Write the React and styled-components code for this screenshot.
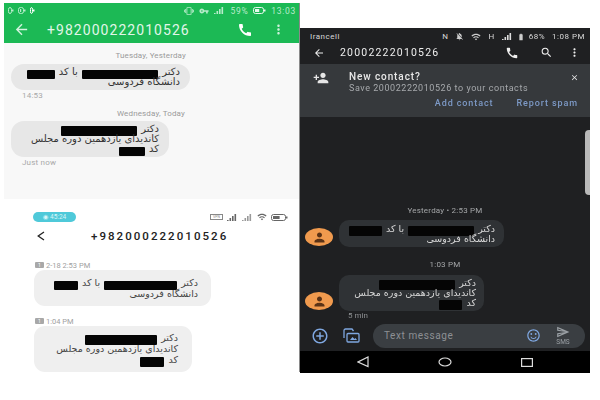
import styled, { createGlobalStyle } from 'styled-components';
import {
  MdArrowBack,
  MdCall,
  MdMoreVert,
  MdSearch,
  MdPersonAdd,
  MdClose,
  MdAddCircleOutline,
  MdPerson,
  MdOutlineSentimentSatisfied,
  MdOutlineSend,
  MdWifi,
  MdVibration,
  MdVpnKey,
  MdNotificationsOff,
  MdBatteryFull,
} from 'react-icons/md';

const GlobalStyle = createGlobalStyle`
  html, body {
    margin: 0;
    padding: 0;
    background: #fff;
    overflow: hidden;
  }
  * { box-sizing: border-box; }
`;

const Page = styled.div`
  width: 600px;
  height: 400px;
  display: flex;
  padding: 3px 0 0 4px;
  font-family: Roboto, "DejaVu Sans", sans-serif;
  filter: blur(0.35px);
`;
const LeftColumn = styled.div`
  width: 296px;
  height: 369px;
  display: flex;
  flex-direction: column;
  border-right: 1px solid #8a8a8a;
`;
const GreenPanel = styled.section`
  height: 197px;
  background: #f8f8f8;
`;
const GreenBar = styled.header`
  height: 40px;
  background: #1cb955;
  color: #fff;
`;
const GreenStatus = styled.div`
  height: 13px;
  padding: 2px 3px 0 4px;
  display: flex;
  align-items: center;
  justify-content: space-between;
  font-size: 8.5px;
  letter-spacing: 0.7px;
  color: #b8eccb;
`;
const StatusGroup = styled.div`
  display: flex;
  align-items: center;
  gap: ${(p) => p.$gap || 4}px;
`;
const GreenToolbar = styled.div`
  height: 27px;
  display: flex;
  align-items: center;
  padding: 0 0 0 9px;
  svg { flex: none; }
`;
const GreenTitle = styled.div`
  width: 190px;
  margin-left: 17px;
  font-size: 14px;
  letter-spacing: 1.05px;
  color: #e2f6e9;
  white-space: nowrap;
`;
const Thread = styled.div`
  padding: ${(p) => p.$pad || '0'};
`;
const DateLabel = styled.div`
  width: ${(p) => p.$width}px;
  height: 12px;
  line-height: 12px;
  font-size: 8px;
  letter-spacing: 0.15px;
  color: #9a9a9a;
  text-align: right;
  margin-top: ${(p) => p.$top || 0}px;
`;
const Bubble = styled.div`
  width: ${(p) => p.$width}px;
  height: ${(p) => p.$height}px;
  margin: ${(p) => p.$margin || '0'};
  padding: ${(p) => p.$pad || '5px 11px'};
  background: ${(p) => p.$bg || '#e7e7e7'};
  color: ${(p) => p.$color || '#333'};
  border-radius: ${(p) => p.$radius || 13}px;
  direction: rtl;
  font-family: "DejaVu Sans", sans-serif;
  font-size: ${(p) => p.$size || 10}px;
  white-space: nowrap;
`;
const Line = styled.div`
  height: ${(p) => p.$line || 10}px;
  line-height: ${(p) => p.$line || 10}px;
`;
const Redact = styled.span`
  display: inline-block;
  width: ${(p) => p.$w}px;
  height: ${(p) => p.$h || 9}px;
  margin: -3px 1px;
  vertical-align: -1px;
  background: #050505;
  border-radius: 1px;
`;
const TimeLabel = styled.div`
  padding-left: 11px;
  height: 12px;
  line-height: 12px;
  font-size: 8px;
  letter-spacing: 0.2px;
  color: #a8a8a8;
`;
const WhitePanel = styled.section`
  flex: 1;
  padding: 13px 0 0 29px;
  background: #fff;
`;
const WhiteStatus = styled.div`
  height: 10px;
  width: 255px;
  display: flex;
  align-items: center;
  justify-content: space-between;
`;
const TimerChip = styled.div`
  width: 43px;
  height: 10px;
  border-radius: 5px;
  background: #4fc9d9;
  color: #d9f5f8;
  font-size: 6.5px;
  line-height: 10px;
  text-align: center;
`;
const VpnBox = styled.span`
  width: 13px;
  height: 6px;
  border: 1px solid #888;
  color: #888;
  font-size: 3.5px;
  line-height: 4px;
  text-align: center;
`;
const WhiteHeader = styled.div`
  height: 27px;
  display: flex;
  align-items: center;
  margin-left: 1px;
  color: #222;
  svg { margin-left: 3px; }
`;
const WhiteTitle = styled.div`
  margin-left: 46px;
  font-size: 11.5px;
  font-weight: 500;
  letter-spacing: 2.05px;
  white-space: nowrap;
`;
const SimRow = styled.div`
  display: flex;
  align-items: center;
  gap: 2px;
  height: 12px;
  margin: ${(p) => p.$top || 0}px 0 0 2px;
  font-size: 7.5px;
  color: #a0a0a0;
`;
const SimBadge = styled.span`
  width: 9px;
  height: 6px;
  background: #a8a8a8;
  color: #fff;
  font-size: 5px;
  line-height: 6px;
  text-align: center;
  border-radius: 1px;
`;
const DarkColumn = styled.section`
  position: relative;
  width: 290px;
  height: 345px;
  margin-top: 25px;
  display: flex;
  flex-direction: column;
  background: #1f2022;
  color: #e6e6e6;
`;
const DarkStatus = styled.div`
  height: 14px;
  padding: 3px 5px 0 10px;
  display: flex;
  align-items: center;
  justify-content: space-between;
  font-size: 8px;
  letter-spacing: 0.5px;
  color: #d8d8d8;
`;
const DarkToolbar = styled.div`
  height: 23px;
  margin-top: -1px;
  display: flex;
  align-items: center;
  padding: 0 0 0 13px;
  color: #eee;
`;
const DarkTitle = styled.div`
  width: 165px;
  margin-left: 15px;
  font-size: 10.5px;
  letter-spacing: 1.2px;
`;
const ToolIcons = styled.div`
  display: flex;
  align-items: center;
  gap: 21px;
  svg:last-child { margin-left: -6px; }
`;
const Banner = styled.div`
  height: 53px;
  display: flex;
  background: #36393c;
  padding: 4px 11px 0 13px;
`;
const BannerBody = styled.div`
  margin-left: 20px;
  flex: 1;
`;
const BannerTitle = styled.div`
  font-size: 10px;
  font-weight: 500;
  letter-spacing: 0.9px;
  line-height: 13px;
  margin-top: 2px;
  color: #e8e8e8;
`;
const BannerText = styled.div`
  font-size: 9px;
  letter-spacing: 0.55px;
  line-height: 10px;
  white-space: nowrap;
  color: #a6a9ac;
`;
const BannerActions = styled.div`
  display: flex;
  justify-content: flex-end;
  gap: 23px;
  margin: 5px -8px 0 0;
  font-size: 9px;
  font-weight: 500;
  letter-spacing: 0.9px;
  color: #7d9ac7;
`;
const DarkThread = styled.div`
  flex: 1;
  display: flex;
  flex-direction: column;
  justify-content: flex-end;
  padding: 0 0 3px 5px;
`;
const Centered = styled.div`
  width: 280px;
  height: 10px;
  line-height: 10px;
  margin-bottom: ${(p) => p.$bottom}px;
  text-align: center;
  font-size: 8px;
  letter-spacing: 0.2px;
  color: #a4a6a8;
`;
const MessageRow = styled.div`
  display: flex;
  align-items: flex-end;
  gap: 6px;
  margin-bottom: ${(p) => p.$bottom || 0}px;
`;
const Avatar = styled.div`
  width: 28px;
  height: 18px;
  border-radius: 50%;
  background: #f09a4e;
  color: #5a3216;
  display: flex;
  align-items: center;
  justify-content: center;
  margin-bottom: 1px;
`;
const Ago = styled.div`
  height: 9px;
  line-height: 9px;
  margin-left: 43px;
  font-size: 8px;
  color: #8e9093;
`;
const Composer = styled.div`
  height: 28px;
  display: flex;
  align-items: center;
  padding: 0 5px 3px 11px;
  color: #7fa7e0;
`;
const ComposerIcons = styled.div`
  display: flex;
  align-items: center;
  gap: 13px;
`;
const Field = styled.div`
  flex: 1;
  height: 24px;
  margin-left: 13px;
  padding: 0 10px 0 11px;
  border-radius: 12px;
  background: #3a3e42;
  display: flex;
  align-items: center;
  font-size: 10px;
  letter-spacing: 0.6px;
  color: #8d9094;
`;
const FieldText = styled.span`
  flex: 1;
`;
const EmojiIcon = styled(MdOutlineSentimentSatisfied)`
  color: #7fa7e0;
`;
const SendGroup = styled.div`
  width: 24px;
  margin-left: 10px;
  display: flex;
  flex-direction: column;
  align-items: center;
  font-size: 6.5px;
  letter-spacing: 0;
  line-height: 7px;
  color: #9ba0a5;
`;
const NavBar = styled.nav`
  height: 22px;
  background: #000;
  display: flex;
  align-items: center;
  justify-content: space-between;
  padding: 0 57px 0 57px;
`;
const ScrollHandle = styled.div`
  position: absolute;
  top: 102px;
  right: 0;
  width: 5px;
  height: 65px;
  background: #b9b9b9;
  border-radius: 4px 0 0 4px;
`;

const Bars = ({ color, count = 4 }) => (
  <svg width="11" height="7" viewBox="0 0 11 7" fill={color}>
    {Array.from({ length: count }).map((_, i) => (
      <rect key={i} x={i * 2.5} y={6 - i * 2} width="1.6" height={1 + i * 2} />
    ))}
  </svg>
);

const Battery = ({ color, width = 14 }) => (
  <svg width={width} height="7" viewBox={`0 0 ${width} 7`} fill="none" stroke={color}>
    <rect x="0.5" y="0.5" width={width - 3} height="6" rx="2" />
    <rect x="2" y="2" width={(width - 6) * 0.6} height="3" fill={color} stroke="none" />
    <rect x={width - 2} y="2.5" width="1.5" height="2" fill={color} stroke="none" />
  </svg>
);

const BackChevron = () => (
  <svg width="8" height="10" viewBox="0 0 8 10" fill="none" stroke="currentColor" strokeWidth="1.3">
    <path d="M7 1L1.2 5L7 9" />
  </svg>
);

const GalleryIcon = () => (
  <svg width="18" height="15" viewBox="0 0 18 15" fill="none" stroke="currentColor" strokeWidth="1.3">
    <path d="M2 10V2.5A1.5 1.5 0 0 1 3.5 1H10l1.5 2" />
    <rect x="5" y="5.5" width="12" height="8.5" rx="1" />
    <path d="M8 12l2.5-3 2 2 1-1 1.5 2z" fill="currentColor" stroke="none" />
  </svg>
);

const BackTriangle = () => (
  <svg width="12" height="12" viewBox="0 0 12 12" fill="none" stroke="#ddd" strokeWidth="1.2">
    <path d="M11 1v9.5L1 6z" />
  </svg>
);
const HomeCircle = () => (
  <svg width="14" height="10" viewBox="0 0 14 10" fill="none" stroke="#ddd" strokeWidth="1.2">
    <ellipse cx="7" cy="5" rx="6" ry="4" />
  </svg>
);
const RecentSquare = () => (
  <svg width="12" height="9" viewBox="0 0 12 9" fill="none" stroke="#ddd" strokeWidth="1.2">
    <rect x="0.6" y="0.6" width="10.8" height="7.8" />
  </svg>
);

const App = () => {
  return (
    <>
      <GlobalStyle />
      <Page>
        <LeftColumn>
          <GreenPanel>
            <GreenBar>
              <GreenStatus>
                <StatusGroup $gap={4}>
                  <Battery color="#b8eccb" width={6} />
                  <Battery color="#b8eccb" width={8} />
                  <Battery color="#fff" width={5} />
                </StatusGroup>
                <StatusGroup $gap={5}>
                  <MdVibration size={10} />
                  <MdVpnKey size={10} />
                  <Bars color="#b8eccb" />
                  <span>59%</span>
                  <Battery color="#e8f8ee" width={13} />
                  <span>13:03</span>
                </StatusGroup>
              </GreenStatus>
              <GreenToolbar>
                <MdArrowBack size={17} color="#d4f3df" />
                <GreenTitle>+982000222010526</GreenTitle>
                <MdCall size={16} />
                <MdMoreVert size={15} style={{ marginLeft: 18 }} color="#cdf1da" />
              </GreenToolbar>
            </GreenBar>
            <Thread $pad="7px 0 0 7px">
              <DateLabel $width={175}>Tuesday, Yesterday</DateLabel>
              <Bubble $width={179} $height={26} $margin="2px 0 0" $pad="3px 10px">
                <Line>
                  دکتر <Redact $w={76} /> با کد <Redact $w={28} />
                </Line>
                <Line>دانشگاه فردوسی</Line>
              </Bubble>
              <TimeLabel>14:53</TimeLabel>
              <DateLabel $width={174} $top={6}>Wednesday, Today</DateLabel>
              <Bubble $width={158} $height={36} $margin="1px 0 0" $pad="3px 10px">
                <Line>
                  دکتر <Redact $w={76} $h={10} />
                </Line>
                <Line>کاندیدای یازدهمین دوره مجلس</Line>
                <Line>
                  کد <Redact $w={26} />
                </Line>
              </Bubble>
              <TimeLabel>Just now</TimeLabel>
            </Thread>
          </GreenPanel>
          <WhitePanel>
            <WhiteStatus>
              <TimerChip>◉ 45:24</TimerChip>
              <StatusGroup $gap={4}>
                <VpnBox>VPN</VpnBox>
                <Bars color="#666" />
                <Bars color="#999" />
                <MdWifi size={10} color="#666" />
                <Battery color="#666" width={17} />
              </StatusGroup>
            </WhiteStatus>
            <WhiteHeader>
              <BackChevron />
              <WhiteTitle>+982000222010526</WhiteTitle>
            </WhiteHeader>
            <SimRow $top={10}>
              <SimBadge>1</SimBadge>
              2-18 2:53 PM
            </SimRow>
            <Bubble $width={177} $height={36} $bg="#efefef" $color="#444" $radius={11} $size={9.5} $margin="-1px 0 0 1px" $pad="7px 13px">
              <Line $line={11}>
                دکتر <Redact $w={73} /> با کد <Redact $w={24} />
              </Line>
              <Line $line={11}>دانشگاه فردوسی</Line>
            </Bubble>
            <SimRow $top={9}>
              <SimBadge>1</SimBadge>
              1:04 PM
            </SimRow>
            <Bubble $width={158} $height={46} $bg="#efefef" $color="#444" $radius={11} $size={9.5} $margin="-1px 0 0 1px" $pad="6px 14px">
              <Line $line={11}>
                دکتر <Redact $w={72} $h={10} />
              </Line>
              <Line $line={11}>کاندیدای یازدهمین دوره مجلس</Line>
              <Line $line={11}>
                کد <Redact $w={24} $h={10} />
              </Line>
            </Bubble>
          </WhitePanel>
        </LeftColumn>

        <DarkColumn>
          <DarkStatus>
            <span>Irancell</span>
            <StatusGroup $gap={7}>
              <span>N</span>
              <MdNotificationsOff size={9} color="#ccc" />
              <MdWifi size={10} color="#ccc" />
              <span>H</span>
              <Bars color="#ddd" />
              <MdBatteryFull size={8} color="#ccc" style={{ margin: '0 -3px' }} />
              <span>68%</span>
              <span>1:08 PM</span>
            </StatusGroup>
          </DarkStatus>
          <DarkToolbar>
            <MdArrowBack size={12} />
            <DarkTitle>20002222010526</DarkTitle>
            <ToolIcons>
              <MdCall size={14} />
              <MdSearch size={13} />
              <MdMoreVert size={13} />
            </ToolIcons>
          </DarkToolbar>
          <Banner>
            <MdPersonAdd size={16} style={{ marginTop: 2 }} />
            <BannerBody>
              <BannerTitle>New contact?</BannerTitle>
              <BannerText>Save 20002222010526 to your contacts</BannerText>
              <BannerActions>
                <span>Add contact</span>
                <span>Report spam</span>
              </BannerActions>
            </BannerBody>
            <MdClose size={9} style={{ marginTop: 5 }} />
          </Banner>
          <DarkThread>
            <Centered $bottom={4}>Yesterday • 2:53 PM</Centered>
            <MessageRow $bottom={13}>
              <Avatar><MdPerson size={15} /></Avatar>
              <Bubble $width={165} $height={27} $bg="#2f3235" $color="#d8d8d8" $radius={10} $size={9.5} $pad="4px 9px">
                <Line>
                  دکتر <Redact $w={66} $h={10} /> با کد <Redact $w={33} $h={10} />
                </Line>
                <Line>دانشگاه فردوسی</Line>
              </Bubble>
            </MessageRow>
            <Centered $bottom={5}>1:03 PM</Centered>
            <MessageRow>
              <Avatar><MdPerson size={15} /></Avatar>
              <Bubble $width={145} $height={36} $bg="#2f3235" $color="#d8d8d8" $radius={10} $size={9.5} $pad="3px 8px">
                <Line>
                  دکتر <Redact $w={76} $h={10} />
                </Line>
                <Line>کاندیدای یازدهمین دوره مجلس</Line>
                <Line>
                  کد <Redact $w={23} $h={10} />
                </Line>
              </Bubble>
            </MessageRow>
            <Ago>5 min</Ago>
          </DarkThread>
          <Composer>
            <ComposerIcons>
              <MdAddCircleOutline size={18} />
              <GalleryIcon />
            </ComposerIcons>
            <Field>
              <FieldText>Text message</FieldText>
              <EmojiIcon size={15} />
              <SendGroup>
                <MdOutlineSend size={14} />
                SMS
              </SendGroup>
            </Field>
          </Composer>
          <NavBar>
            <BackTriangle />
            <HomeCircle />
            <RecentSquare />
          </NavBar>
          <ScrollHandle />
        </DarkColumn>
      </Page>
    </>
  );
};

export default App;
